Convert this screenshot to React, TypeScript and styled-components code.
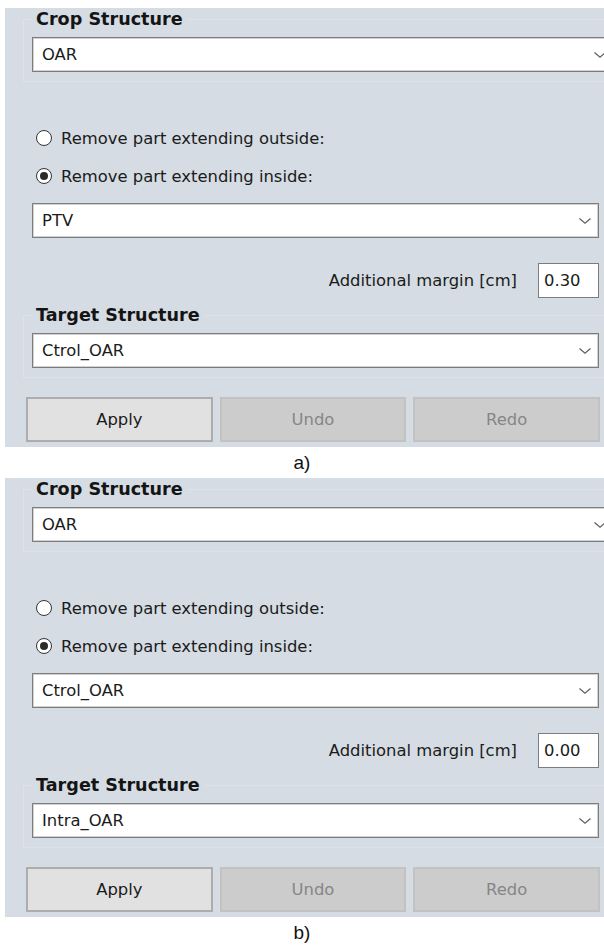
import React, { FC } from 'react'
import styled, { createGlobalStyle } from 'styled-components'

const GlobalStyle = createGlobalStyle`
    html, body {
        margin: 0;
        padding: 0;
        background: #fff;
        overflow: hidden;
    }
`

const Figure = styled.div`
    width: 604px;
    height: 948px;
    overflow: hidden;
    padding-top: 8px;
    box-sizing: border-box;
`

const Panel = styled.div`
    width: 605px;
    height: 439px;
    margin-left: 5px;
    box-sizing: border-box;
    padding: 1px 2px 0 18px;
    display: flex;
    flex-direction: column;
    background: #d5dce3;
    font-family: "DejaVu Sans", Tahoma, Verdana, sans-serif;
    font-size: 16.4px;
    color: #1b1b1b;
`

const Caption = styled.div`
    height: 31px;
    display: flex;
    align-items: center;
    justify-content: center;
    font-family: "Liberation Sans", Arial, sans-serif;
    font-size: 19px;
    color: #111;
`

const Group = styled.fieldset<{ $offset: number }>`
    margin: ${({ $offset }) => $offset}px 0 0;
    padding: 8px 8px 9px;
    border: 1px solid #dce2e8;
    min-width: 0;
`

const Legend = styled.legend`
    padding: 0 4px;
    font-size: 17.6px;
    line-height: 20px;
    font-weight: bold;
    color: #141414;
`

const ComboBox = styled.div<{ $bleed?: boolean; $offset?: number }>`
    height: 35px;
    box-sizing: border-box;
    margin: ${({ $offset = 0 }) => $offset}px ${({ $bleed }) => ($bleed ? '-15px' : '0')} 0 0;
    padding: 0 6px 0 9px;
    display: flex;
    align-items: center;
    justify-content: space-between;
    background: #fff;
    border: 1px solid #7c7c7c;
    box-shadow: inset 0 0 0 1px #d2d2d2;
`

const Indent = styled.div<{ $offset: number }>`
    margin: ${({ $offset }) => $offset}px 9px 0;
`

const RadioRow = styled.label`
    height: 38px;
    padding-left: 4px;
    display: flex;
    align-items: center;
    gap: 9px;
`

const RadioDot = styled.span<{ $checked: boolean }>`
    width: 16px;
    height: 16px;
    box-sizing: border-box;
    border-radius: 50%;
    border: 1px solid #333;
    background: #fff;
    display: flex;
    align-items: center;
    justify-content: center;
    &::after {
        content: '';
        width: 8px;
        height: 8px;
        border-radius: 50%;
        background: ${({ $checked }) => ($checked ? '#2b2b2b' : 'transparent')};
    }
`

const MarginRow = styled.div`
    height: 35px;
    display: flex;
    align-items: center;
    justify-content: flex-end;
    gap: 21px;
`

const MarginInput = styled.div`
    width: 61px;
    height: 35px;
    box-sizing: border-box;
    padding-left: 5px;
    display: flex;
    align-items: center;
    background: #fff;
    border: 1px solid #7c7c7c;
`

const ButtonRow = styled.div`
    margin: 19px 8px 0 3px;
    display: grid;
    grid-template-columns: repeat(3, 1fr);
    gap: 7px;
`

const Button = styled.div<{ $disabled?: boolean }>`
    height: 45px;
    box-sizing: border-box;
    display: flex;
    align-items: center;
    justify-content: center;
    background: ${({ $disabled }) => ($disabled ? '#cccccc' : '#e1e1e1')};
    border: 2px solid ${({ $disabled }) => ($disabled ? '#c2c2c2' : '#adadad')};
    color: ${({ $disabled }) => ($disabled ? '#868686' : '#1b1b1b')};
`

const Chevron: FC = () => (
    <svg width="14" height="8" viewBox="0 0 14 8">
        <path d="M1.5 1.5 L7 6.3 L12.5 1.5" fill="none" stroke="#5e5e5e" strokeWidth="1.2" />
    </svg>
)

type Combo = { value: string; bleed?: boolean; offset?: number }

const Select: FC<Combo> = ({ value, bleed, offset }) => (
    <ComboBox $bleed={bleed} $offset={offset}>
        <span>{value}</span>
        <Chevron />
    </ComboBox>
)

type CropPanelProps = {
    inside: string
    margin: string
    target: string
}

const CropPanel: FC<CropPanelProps> = ({ inside, margin, target }) => (
    <Panel>
        <Group $offset={0}>
            <Legend>Crop Structure</Legend>
            <Select value="OAR" bleed />
        </Group>
        <Indent $offset={37}>
            <RadioRow>
                <RadioDot $checked={false} />
                Remove part extending outside:
            </RadioRow>
            <RadioRow>
                <RadioDot $checked />
                Remove part extending inside:
            </RadioRow>
            <Select value={inside} offset={8} />
        </Indent>
        <Indent $offset={25}>
            <MarginRow>
                <span>Additional margin [cm]</span>
                <MarginInput>{margin}</MarginInput>
            </MarginRow>
        </Indent>
        <Group $offset={7}>
            <Legend>Target Structure</Legend>
            <Select value={target} />
        </Group>
        <ButtonRow>
            <Button>Apply</Button>
            <Button $disabled>Undo</Button>
            <Button $disabled>Redo</Button>
        </ButtonRow>
    </Panel>
)

export default function App() {
    return (
        <Figure>
            <GlobalStyle />
            <CropPanel inside="PTV" margin="0.30" target="Ctrol_OAR" />
            <Caption>a)</Caption>
            <CropPanel inside="Ctrol_OAR" margin="0.00" target="Intra_OAR" />
            <Caption>b)</Caption>
        </Figure>
    )
}
